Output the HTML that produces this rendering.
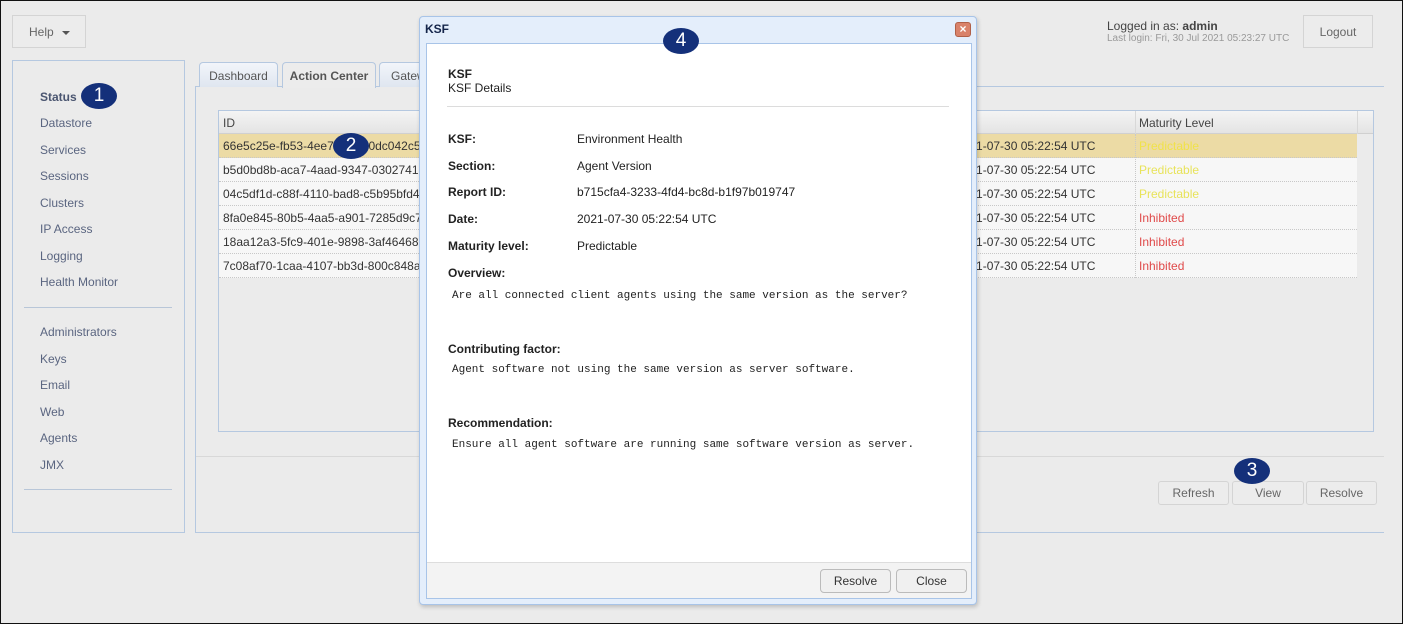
<!DOCTYPE html>
<html><head><style>
*{box-sizing:border-box;margin:0;padding:0}
body{width:1403px;height:624px;overflow:hidden;background:#ebebeb;font-family:"Liberation Sans",Arial,sans-serif;font-size:12px;color:#333;position:relative}
.frame{position:absolute;left:0;top:0;width:1403px;height:624px;border:1px solid #111;z-index:50;pointer-events:none}
.a{position:absolute;white-space:nowrap}
.btn{position:absolute;border:1px solid #d4d4d4;background:#ececec;color:#666;text-align:center;font-size:12px;white-space:nowrap}
.nav{position:absolute;left:40px;color:#5a6580;font-size:12px;white-space:nowrap}
.sep{position:absolute;left:24px;width:148px;height:1px;background:#b8c6d8}
.tab{position:absolute;top:62px;height:25px;border:1px solid #b5c8e0;border-bottom:none;border-radius:4px 4px 0 0;background:linear-gradient(#f2f5fa,#dfe6f0);color:#555;font-size:12px;padding-top:6px;text-align:center;white-space:nowrap;overflow:hidden}
.row{position:absolute;left:219px;width:1138px;height:24px;border-bottom:1px dotted #c8c8c8;background:#f7f7f7}
.row span{position:absolute;top:5px;white-space:nowrap}
.badge{position:absolute;width:36px;height:26px;border-radius:50%;background:#14307a;color:#fff;font-size:19px;text-align:center;line-height:26px;z-index:40}
.lbl{position:absolute;left:448px;font-weight:bold;font-size:12px;color:#222;white-space:nowrap}
.val{position:absolute;left:577px;font-size:12px;color:#222;white-space:nowrap}
.mono{position:absolute;left:452px;font-family:"Liberation Mono",monospace;font-size:11px;color:#222;white-space:nowrap}
</style></head><body>
<div class="frame"></div>
<div class="btn" style="left:12px;top:15px;width:74px;height:33px;padding-top:9px;text-align:left;padding-left:16px">Help <span style="display:inline-block;border-left:4px solid transparent;border-right:4px solid transparent;border-top:4px solid #555;vertical-align:middle;margin-left:5px"></span></div>
<div class="a" style="left:1107px;top:19px;font-size:12px;color:#444">Logged in as: <b>admin</b></div>
<div class="a" style="left:1107px;top:33px;font-size:10px;color:#999">Last login: Fri, 30 Jul 2021 05:23:27 UTC</div>
<div class="btn" style="left:1303px;top:15px;width:70px;height:33px;padding-top:9px">Logout</div>

<div class="a" style="left:12px;top:60px;width:173px;height:473px;border:1px solid #b5c8e0"></div>
<div class="nav" style="top:90px;font-weight:bold;color:#4a5570">Status</div>
<div class="nav" style="top:116px">Datastore</div>
<div class="nav" style="top:143px">Services</div>
<div class="nav" style="top:169px">Sessions</div>
<div class="nav" style="top:196px">Clusters</div>
<div class="nav" style="top:222px">IP Access</div>
<div class="nav" style="top:249px">Logging</div>
<div class="nav" style="top:275px">Health Monitor</div>
<div class="sep" style="top:307px"></div>
<div class="nav" style="top:325px">Administrators</div>
<div class="nav" style="top:352px">Keys</div>
<div class="nav" style="top:378px">Email</div>
<div class="nav" style="top:405px">Web</div>
<div class="nav" style="top:431px">Agents</div>
<div class="nav" style="top:458px">JMX</div>
<div class="sep" style="top:489px"></div>

<div class="a" style="left:195px;top:86px;width:1189px;height:447px;border-top:1px solid #b5c8e0;border-left:1px solid #b5c8e0;border-bottom:1px solid #b5c8e0"></div>
<div class="tab" style="left:199px;width:79px">Dashboard</div>
<div class="tab" style="left:282px;width:94px;background:#ececec;height:26px;font-weight:bold;color:#555">Action Center</div>
<div class="tab" style="left:379px;width:60px;text-align:left;padding-left:11px">Gateway</div>
<div class="a" style="left:196px;top:456px;width:1188px;height:1px;background:#d8d8d8"></div>

<div class="a" style="left:218px;top:110px;width:1156px;height:322px;border:1px solid #b5c8e0;background:#ebebeb"></div>
<div class="a" style="left:219px;top:111px;width:1154px;height:23px;background:linear-gradient(#f4f4f4,#e4e4e4);border-bottom:1px solid #d0d0d0"></div>
<div class="a" style="left:223px;top:116px;color:#444">ID</div>
<div class="a" style="left:1139px;top:116px;color:#444">Maturity Level</div>
<div class="a" style="left:1135px;top:111px;width:1px;height:23px;background:#d8d8d8"></div>
<div class="a" style="left:1357px;top:111px;width:1px;height:23px;background:#d8d8d8"></div>

<div class="row" style="top:134px;background:#ecdba5"><span style="left:4px">66e5c25e-fb53-4ee7-a9b1-0dc042c5c0a1</span><span style="left:737px">2021-07-30 05:22:54 UTC</span><span style="left:920px;color:#f0e24a">Predictable</span></div>
<div class="row" style="top:158px"><span style="left:4px">b5d0bd8b-aca7-4aad-9347-030274193bd2</span><span style="left:737px">2021-07-30 05:22:54 UTC</span><span style="left:920px;color:#e8e35a">Predictable</span></div>
<div class="row" style="top:182px"><span style="left:4px">04c5df1d-c88f-4110-bad8-c5b95bfd40a7</span><span style="left:737px">2021-07-30 05:22:54 UTC</span><span style="left:920px;color:#e8e35a">Predictable</span></div>
<div class="row" style="top:206px"><span style="left:4px">8fa0e845-80b5-4aa5-a901-7285d9c7e0f3</span><span style="left:737px">2021-07-30 05:22:54 UTC</span><span style="left:920px;color:#e04a4a">Inhibited</span></div>
<div class="row" style="top:230px"><span style="left:4px">18aa12a3-5fc9-401e-9898-3af4646870c2</span><span style="left:737px">2021-07-30 05:22:54 UTC</span><span style="left:920px;color:#e04a4a">Inhibited</span></div>
<div class="row" style="top:254px"><span style="left:4px">7c08af70-1caa-4107-bb3d-800c848aa1e6</span><span style="left:737px">2021-07-30 05:22:54 UTC</span><span style="left:920px;color:#e04a4a">Inhibited</span></div>
<div class="a" style="left:1135px;top:134px;width:1px;height:144px;border-left:1px dotted #c8c8c8"></div>

<div class="btn" style="left:1158px;top:481px;width:71px;height:24px;padding-top:4px;border-radius:3px">Refresh</div>
<div class="btn" style="left:1232px;top:481px;width:72px;height:24px;padding-top:4px;border-radius:3px">View</div>
<div class="btn" style="left:1306px;top:481px;width:71px;height:24px;padding-top:4px;border-radius:3px">Resolve</div>

<div class="a" style="left:419px;top:16px;width:558px;height:589px;border:1px solid #a8c4e8;border-radius:4px;background:#e4eefb;box-shadow:1px 2px 4px rgba(0,0,0,.2);z-index:10">
  <div class="a" style="left:5px;top:5px;font-weight:bold;font-size:12px;color:#15254a">KSF</div>
  <div class="a" style="left:535px;top:5px;width:16px;height:15px;border-radius:3px;background:#d9826a;border:1px solid #b06048;color:#fff;font-size:12px;line-height:12px;text-align:center;font-weight:bold">×</div>
  <div class="a" style="left:6px;top:26px;width:546px;height:556px;border:1px solid #a8c4e8;background:#fff"></div>
  <div class="a" style="left:7px;top:545px;width:544px;height:36px;background:#f3f3f3;border-top:1px solid #ddd"></div>
  <div class="btn" style="left:400px;top:552px;width:71px;height:24px;padding-top:4px;border-radius:4px;background:#f0f0f0;color:#333;border-color:#bbb">Resolve</div>
  <div class="btn" style="left:476px;top:552px;width:71px;height:24px;padding-top:4px;border-radius:4px;background:#f0f0f0;color:#333;border-color:#bbb">Close</div>
</div>
<div style="position:absolute;left:0;top:0;width:1403px;height:624px;z-index:20">
<div class="a" style="left:448px;top:67px;font-weight:bold;color:#222">KSF</div>
<div class="a" style="left:448px;top:81px;color:#222">KSF Details</div>
<div class="a" style="left:447px;top:106px;width:502px;height:1px;background:#dcdcdc"></div>
<div class="lbl" style="top:132px">KSF:</div><div class="val" style="top:132px">Environment Health</div>
<div class="lbl" style="top:159px">Section:</div><div class="val" style="top:159px">Agent Version</div>
<div class="lbl" style="top:185px">Report ID:</div><div class="val" style="top:185px">b715cfa4-3233-4fd4-bc8d-b1f97b019747</div>
<div class="lbl" style="top:212px">Date:</div><div class="val" style="top:212px">2021-07-30 05:22:54 UTC</div>
<div class="lbl" style="top:239px">Maturity level:</div><div class="val" style="top:239px">Predictable</div>
<div class="lbl" style="top:266px">Overview:</div>
<div class="mono" style="top:290px">Are all connected client agents using the same version as the server?</div>
<div class="lbl" style="top:342px">Contributing factor:</div>
<div class="mono" style="top:364px">Agent software not using the same version as server software.</div>
<div class="lbl" style="top:416px">Recommendation:</div>
<div class="mono" style="top:439px">Ensure all agent software are running same software version as server.</div>
</div>

<div class="badge" style="left:81px;top:83px">1</div>
<div class="badge" style="left:333px;top:133px">2</div>
<div class="badge" style="left:1234px;top:458px">3</div>
<div class="badge" style="left:663px;top:28px">4</div>
</body></html>
